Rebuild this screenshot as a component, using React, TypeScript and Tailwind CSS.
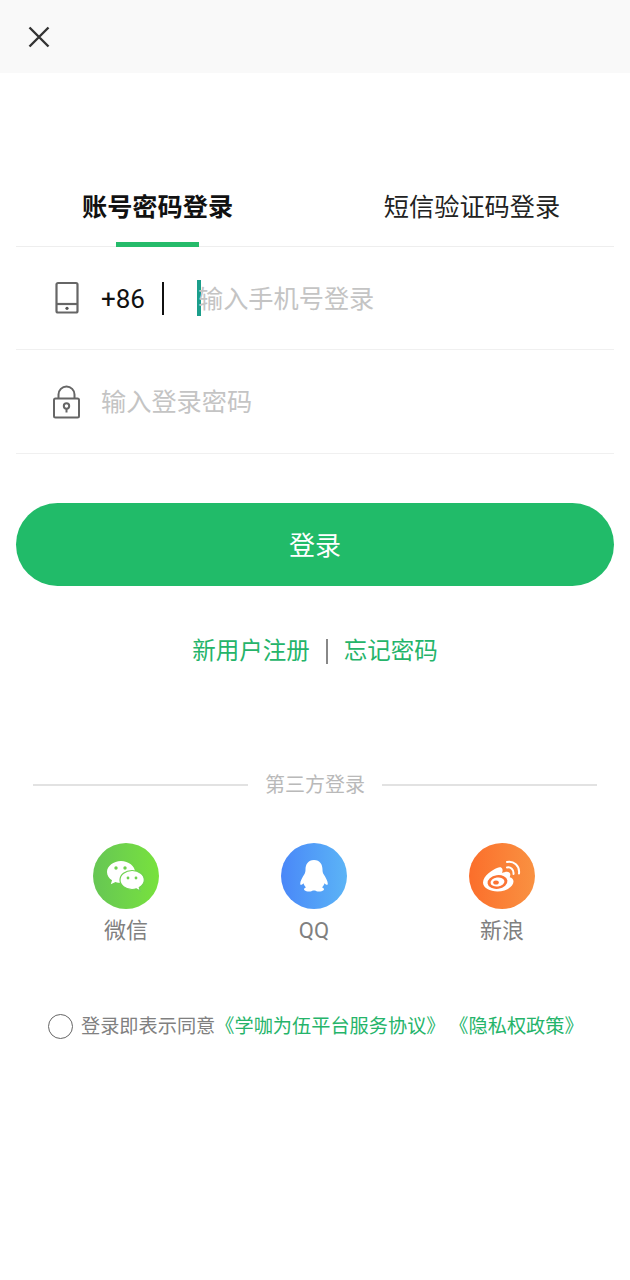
import React from "react";

const font = { fontFamily: '"Roboto", "Noto Sans CJK SC", sans-serif' };

function Phone() {
  return (
    <svg width="26" height="34" viewBox="0 0 26 34" fill="none" stroke="#666" strokeWidth="2.2">
      <rect x="2.500" y="2" width="21" height="29.500" rx="1.500" />
      <path d="M2.500 23H23.500" />
      <circle cx="13" cy="27.300" r="1.600" fill="#555" stroke="none" />
    </svg>
  );
}

function Lock() {
  return (
    <svg width="30" height="34" viewBox="0 0 30 34" fill="none" stroke="#666" strokeWidth="2">
      <rect x="2" y="13.500" width="25" height="19" rx="1.500" />
      <path d="M6.500 13.500V9.500a8 8 0 0 1 16 0V13.500" />
      <circle cx="14.500" cy="21" r="2.700" />
      <path d="M14.500 23.500V27.500" />
    </svg>
  );
}

function WeChat() {
  return (
    <svg width="40" height="32" viewBox="0 0 40 32">
      <path d="M15 1C7.500 1 1 6 1 12c0 3.500 2 6.300 5 8.300l-1.200 4 4.700-2.400c2 .6 3.500.8 5.500.8 8 0 14-5 14-10.700C29 6 22.500 1 15 1z" fill="#fff" />
      <path d="M26 10.500c-6.600 0-12 4.300-12 9.500s5.400 9.500 12 9.500c1.500 0 3-.2 4.300-.7l4 2.300-1-3.600c3-1.800 5-4.500 5-7.500 0-5.200-5.400-9.500-12-9.500z" fill="#fff" stroke="#6fd24f" strokeWidth="1.200" />
      <circle cx="10" cy="8" r="1.700" fill="#6fd24f" />
      <circle cx="19" cy="8" r="1.700" fill="#6fd24f" />
      <circle cx="22" cy="18" r="1.400" fill="#6fd24f" />
      <circle cx="30" cy="18" r="1.400" fill="#6fd24f" />
    </svg>
  );
}

function QQ() {
  return (
    <svg width="30" height="34" viewBox="0 0 30 34">
      <path d="M15 1C9 1 6.500 5.500 6.500 10.500c0 1.800-.2 3-1 4.500C3.500 18.500 1 22 1.200 25c.2 1.300 1.500 1.200 3.300-.8.500 1.800 1.300 3 2.500 4-2 .8-2.500 2-1.500 3 1.300 1.300 4 1.500 6 1.200 1.300-.2 2.300-.9 3.500-.9s2.200.7 3.500.9c2 .3 4.700.1 6-1.200 1-1 .5-2.200-1.500-3 1.200-1 2-2.200 2.500-4 1.800 2 3.100 2.100 3.300.8.200-3-2.300-6.500-4.300-10-.8-1.500-1-2.700-1-4.500C23.500 5.500 21 1 15 1z" fill="#fff" />
    </svg>
  );
}

function Weibo() {
  return (
    <svg width="40" height="32" viewBox="0 0 40 32" fill="none">
      <path d="M15 8C11 9.500 1 15.500 1 22.500 1 28 8 31.500 15.500 31.500c8.500 0 16-5 16-10 0-2.500-1.500-3.700-3.800-4.300.8-2 1-3.700-.4-4.700-1.800-1.300-4.800-.4-7.300.6 1-2.700.7-4.500-.6-5.300C18.500 7 16.500 7.400 15 8z" fill="#fff" />
      <ellipse cx="15.500" cy="22" rx="10" ry="6.800" fill="#fb7434" transform="rotate(-8 15.500 22)" />
      <ellipse cx="15.500" cy="22" rx="7" ry="4.500" fill="#fff" transform="rotate(-8 15.500 22)" />
      <ellipse cx="14" cy="22.500" rx="2.800" ry="2.100" fill="#fb7434" />
      <path d="M25 7.500c3.500-.8 7 2 6.500 6.500" stroke="#fff" strokeWidth="2" strokeLinecap="round" />
      <path d="M25 2c6.500-1.300 13 3.500 12 11.500" stroke="#fff" strokeWidth="2" strokeLinecap="round" />
    </svg>
  );
}

function Social({ label, bg, children }: { label: string; bg: string; children: React.ReactNode }) {
  return (
    <div className="flex w-[66px] flex-col items-center">
      <div className={`flex h-[66px] w-[66px] items-center justify-center rounded-full ${bg}`}>{children}</div>
      <span className="mt-[7px] whitespace-nowrap text-[22px] leading-[30px] text-[#808080]">{label}</span>
    </div>
  );
}

export default function App() {
  return (
    <div className="flex h-[1280px] w-[630px] flex-col bg-white" style={font}>
      <header className="flex h-[73px] items-center bg-[#f9f9f9] pl-[28px]">
        <svg width="22" height="22" viewBox="0 0 22 22" fill="none" stroke="#333" strokeWidth="2.400">
          <path d="M1.500 1.500L20.500 20.500M20.500 1.500L1.500 20.500" />
        </svg>
      </header>

      <div className="mx-[16px] mt-[96px] flex h-[78px] justify-between border-b border-[#eeeeee] text-[25.200px] leading-[78px]">
        <div className="relative flex h-[78px] w-[283px] justify-center font-bold text-[#111]">
          账号密码登录
          <div className="absolute bottom-0 left-[100px] h-[5px] w-[83px] bg-[#25bb6a]" />
        </div>
        <div className="flex w-[284px] justify-center text-[#222]">短信验证码登录</div>
      </div>

      <div className="mx-[16px] flex h-[103px] items-center border-b border-[#f0f0f0]">
        <div className="ml-[38px] flex w-[26px] justify-center"><Phone /></div>
        <span className="ml-[21px] mt-[2px] text-[26px] text-[#111]">+86</span>
        <div className="ml-[17px] h-[33px] w-[2px] bg-[#111]" />
        <div className="ml-[33px] flex items-center">
          <div className="h-[36px] w-[4px] bg-[#1b9e8b]" />
          <span className="ml-[-3px] mt-[4px] text-[25.200px] text-[#c4c4c4]">输入手机号登录</span>
        </div>
      </div>

      <div className="mx-[16px] flex h-[104px] items-center border-b border-[#f0f0f0]">
        <div className="ml-[36px] flex w-[30px] justify-center"><Lock /></div>
        <span className="ml-[19px] mt-[3px] text-[25.200px] text-[#c4c4c4]">输入登录密码</span>
      </div>

      <button className="mx-[16px] mt-[49px] flex h-[83px] items-center justify-center rounded-[42px] bg-[#21bb69] pt-[3px] text-[26px] text-white">
        登录
      </button>

      <div className="mt-[47px] flex h-[36px] items-center justify-center pt-[2px] text-[23.500px] text-[#25b46a]">
        <span>新用户注册</span>
        <div className="mx-[16px] mt-[-2px] h-[25px] w-[2px] bg-[#888]" />
        <span>忘记密码</span>
      </div>

      <div className="mx-[33px] mt-[98px] flex items-center text-[20px] leading-[34px] text-[#b9b9b9]">
        <div className="h-[2px] flex-1 bg-[#e2e2e2]" />
        <span className="mx-[17px] pt-[1px]">第三方登录</span>
        <div className="h-[2px] flex-1 bg-[#e2e2e2]" />
      </div>

      <div className="ml-[93px] mt-[41px] flex gap-[122px]">
        <Social label="微信" bg="bg-gradient-to-r from-[#66c653] to-[#78e23c]"><WeChat /></Social>
        <Social label="QQ" bg="bg-gradient-to-r from-[#4a87f8] to-[#5cb4f6]"><QQ /></Social>
        <Social label="新浪" bg="bg-gradient-to-r from-[#fb6e2b] to-[#f99141]"><Weibo /></Social>
      </div>

      <div className="ml-[48px] mt-[66px] flex items-center text-[19.200px] leading-[28px]">
        <div className="h-[25px] w-[25px] rounded-full border-[1.500px] border-[#666]" />
        <span className="ml-[8px] pt-[1px] text-[#808080]">登录即表示同意</span>
        <span className="whitespace-nowrap pt-[1px] text-[#25b46a]">《学咖为伍平台服务协议》</span>
        <span className="ml-[-1px] whitespace-nowrap pt-[1px] text-[#25b46a]">&nbsp;《隐私权政策》</span>
      </div>
    </div>
  );
}
